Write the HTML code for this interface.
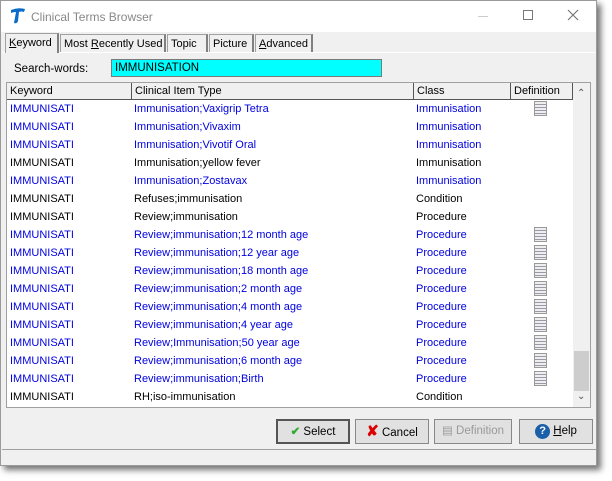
<!DOCTYPE html>
<html><head><style>
*{margin:0;padding:0;box-sizing:border-box}
body{width:612px;height:481px;background:#fff;font-family:"Liberation Sans",sans-serif;font-size:11px;position:relative;overflow:hidden}
.win{position:absolute;left:0;top:0;width:597px;height:466px;background:#f0f0f0;border:1px solid #9a9a9a;box-shadow:4px 4px 6px rgba(0,0,0,.55)}
.title{position:absolute;left:0;top:0;width:595px;height:31px;background:#fff;}
.title span{position:absolute;left:30px;top:9px;font-size:12px;color:#888}
.tabs{position:absolute;top:33px;left:4px;height:18px}
.tab{position:absolute;top:0;height:18px;border:1px solid #a0a0a0;border-bottom:none;background:#f0f0f0;font-size:11px;padding:3px 0 0 3px;border-right:2px solid #808080;white-space:nowrap;overflow:hidden}
.search{position:absolute;left:110px;top:58px;width:271px;height:18px;background:#0ff;border:1px solid #7a7a7a;padding:2px 3px;font-size:11.5px}
.list{position:absolute;left:5px;top:81px;width:585px;height:326px;background:#fff;border:1px solid #a0a0a0}
.hdr{position:absolute;top:0;height:17px;border-right:1px solid #555;border-bottom:1px solid #555;background:#f0f0f0;padding:2px 3px;font-size:11px;white-space:nowrap}
.row{position:absolute;left:0;height:18px;width:566px;font-size:11px;white-space:nowrap}
.row div{position:absolute;top:3px}
.b{color:#0000e0}
.sb{position:absolute;left:566px;top:0;width:17px;height:324px;background:#f0f0f0}
.ic{position:absolute;left:527px;top:1px;width:13px;height:15px;background:repeating-linear-gradient(#eee 0 2px,#99a 2px 3px);border:1px solid #999}
.btn{position:absolute;top:418px;height:25px;border:1px solid #888;background:#e1e1e1;font-size:11.5px;text-align:center;line-height:23px;white-space:nowrap}
</style></head><body>
<div class="win">
<div class="title">
<svg style="position:absolute;left:9px;top:6px" width="16" height="18" viewBox="0 0 16 18"><path d="M1 3 Q8 0 15 2 L14 5 Q11 4 9 5 L8 14 Q7 17 4 16 L6 5 Q3 5 1 6Z" fill="#0a6cc8"/></svg>
<span>Clinical Terms Browser</span>
<div style="position:absolute;left:477px;top:15px;width:10px;height:1px;background:#ccc"></div>
<div style="position:absolute;left:522px;top:9px;width:10px;height:10px;border:1px solid #777"></div>
<svg style="position:absolute;left:566px;top:8px" width="12" height="12"><path d="M1 1L11 11M11 1L1 11" stroke="#777" stroke-width="1.2"/></svg>
</div>
<div class="tabs">
<div class="tab" style="left:0;width:54px;top:-1px;height:20px;z-index:2"><u>K</u>eyword</div>
<div class="tab" style="left:55px;width:106px">Most <u>R</u>ecently Used</div>
<div class="tab" style="left:162px;width:41px">Topic</div>
<div class="tab" style="left:204px;width:45px">Picture</div>
<div class="tab" style="left:250px;width:58px"><u>A</u>dvanced</div>
</div>
<div style="position:absolute;left:1px;top:51px;width:594px;height:1px;background:#fff"></div>
<div style="position:absolute;left:13px;top:62px;font-size:11.5px">Search-words:</div>
<div class="search">IMMUNISATION</div>
<div class="list">
<div class="hdr" style="left:0;width:125px">Keyword</div>
<div class="hdr" style="left:125px;width:282px">Clinical Item Type</div>
<div class="hdr" style="left:407px;width:97px">Class</div>
<div class="hdr" style="left:504px;width:62px">Definition</div>
<div id="rows"></div>
<div class="sb">
<div style="position:absolute;left:4px;top:5px;font-size:10px;color:#555">&#8963;</div>
<div style="position:absolute;left:1px;top:268px;width:15px;height:40px;background:#cdcdcd"></div>
<div style="position:absolute;left:4px;top:308px;font-size:10px;color:#555">&#8964;</div>
</div>
</div>
<div class="btn" style="left:275px;width:74px;border:2px solid #555"><span style="color:#3a3;font-weight:bold">&#10004;</span> Select</div>
<div class="btn" style="left:354px;width:74px"><span style="color:#d00;font-weight:bold;font-size:15px">&#10008;</span> Cancel</div>
<div class="btn" style="left:433px;width:78px;color:#999">&#9636; Definition</div>
<div class="btn" style="left:518px;width:74px"><span style="display:inline-block;width:15px;height:15px;border-radius:50%;background:#1a5fa8;color:#fff;font-weight:bold;line-height:15px;font-size:11px">?</span> <u>H</u>elp</div>
<div style="position:absolute;left:1px;top:448px;width:594px;height:1px;background:#a0a0a0"></div>
</div>
<script>
var d=[["Immunisation;Vaxigrip Tetra","Immunisation",1,1],["Immunisation;Vivaxim","Immunisation",1,0],["Immunisation;Vivotif Oral","Immunisation",1,0],["Immunisation;yellow fever","Immunisation",0,0],["Immunisation;Zostavax","Immunisation",1,0],["Refuses;immunisation","Condition",0,0],["Review;immunisation","Procedure",0,0],["Review;immunisation;12 month age","Procedure",1,1],["Review;immunisation;12 year age","Procedure",1,1],["Review;immunisation;18 month age","Procedure",1,1],["Review;immunisation;2 month age","Procedure",1,1],["Review;immunisation;4 month age","Procedure",1,1],["Review;immunisation;4 year age","Procedure",1,1],["Review;Immunisation;50 year age","Procedure",1,1],["Review;immunisation;6 month age","Procedure",1,1],["Review;immunisation;Birth","Procedure",1,1],["RH;iso-immunisation","Condition",0,0]];
var h="";d.forEach(function(r,i){h+='<div class="row'+(r[2]?' b':'')+'" style="top:'+(17+i*18)+'px"><div style="left:3px">IMMUNISATI</div><div style="left:127px">'+r[0]+'</div><div style="left:409px">'+r[1]+'</div>'+(r[3]?'<span class="ic"></span>':'')+'</div>'});
document.getElementById("rows").innerHTML=h;
</script>
</body></html>
